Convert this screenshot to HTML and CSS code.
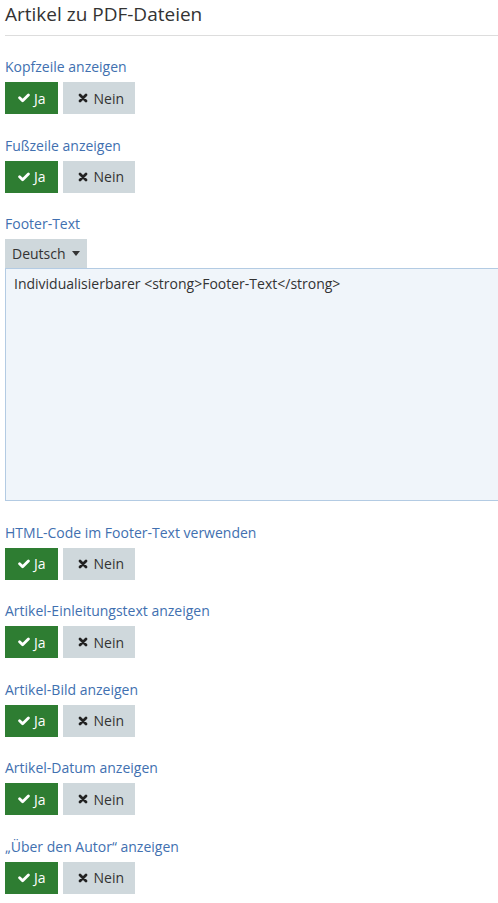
FILE: index.html
```html
<!DOCTYPE html>
<html lang="de">
<head>
<meta charset="utf-8">
<title>Artikel zu PDF-Dateien</title>
<link rel="stylesheet" href="styles.css">
</head>
<body>
<div class="page">
  <h1 class="title">Artikel zu PDF-Dateien</h1>

  <div class="group">
    <div class="label">Kopfzeile anzeigen</div>
    <div class="toggle">
      <span class="btn btn-yes"><svg class="ico-check" viewBox="0 0 12 10"><polyline points="1.6,4.8 4.6,7.8 10.4,2" /></svg>Ja</span>
      <span class="btn btn-no"><svg class="ico-x" viewBox="0 0 10 10"><path d="M2 2L8 8M8 2L2 8"/></svg>Nein</span>
    </div>
  </div>

  <div class="group">
    <div class="label">Fußzeile anzeigen</div>
    <div class="toggle">
      <span class="btn btn-yes"><svg class="ico-check" viewBox="0 0 12 10"><polyline points="1.6,4.8 4.6,7.8 10.4,2" /></svg>Ja</span>
      <span class="btn btn-no"><svg class="ico-x" viewBox="0 0 10 10"><path d="M2 2L8 8M8 2L2 8"/></svg>Nein</span>
    </div>
  </div>

  <div class="group">
    <div class="label">Footer-Text</div>
    <div class="lang"><span>Deutsch</span><span class="caret"></span></div>
    <div class="textarea">Individualisierbarer &lt;strong&gt;Footer-Text&lt;/strong&gt;</div>
  </div>

  <div class="group">
    <div class="label">HTML-Code im Footer-Text verwenden</div>
    <div class="toggle">
      <span class="btn btn-yes"><svg class="ico-check" viewBox="0 0 12 10"><polyline points="1.6,4.8 4.6,7.8 10.4,2" /></svg>Ja</span>
      <span class="btn btn-no"><svg class="ico-x" viewBox="0 0 10 10"><path d="M2 2L8 8M8 2L2 8"/></svg>Nein</span>
    </div>
  </div>

  <div class="group">
    <div class="label">Artikel-Einleitungstext anzeigen</div>
    <div class="toggle">
      <span class="btn btn-yes"><svg class="ico-check" viewBox="0 0 12 10"><polyline points="1.6,4.8 4.6,7.8 10.4,2" /></svg>Ja</span>
      <span class="btn btn-no"><svg class="ico-x" viewBox="0 0 10 10"><path d="M2 2L8 8M8 2L2 8"/></svg>Nein</span>
    </div>
  </div>

  <div class="group">
    <div class="label">Artikel-Bild anzeigen</div>
    <div class="toggle">
      <span class="btn btn-yes"><svg class="ico-check" viewBox="0 0 12 10"><polyline points="1.6,4.8 4.6,7.8 10.4,2" /></svg>Ja</span>
      <span class="btn btn-no"><svg class="ico-x" viewBox="0 0 10 10"><path d="M2 2L8 8M8 2L2 8"/></svg>Nein</span>
    </div>
  </div>

  <div class="group">
    <div class="label">Artikel-Datum anzeigen</div>
    <div class="toggle">
      <span class="btn btn-yes"><svg class="ico-check" viewBox="0 0 12 10"><polyline points="1.6,4.8 4.6,7.8 10.4,2" /></svg>Ja</span>
      <span class="btn btn-no"><svg class="ico-x" viewBox="0 0 10 10"><path d="M2 2L8 8M8 2L2 8"/></svg>Nein</span>
    </div>
  </div>

  <div class="group">
    <div class="label">„Über den Autor“ anzeigen</div>
    <div class="toggle">
      <span class="btn btn-yes"><svg class="ico-check" viewBox="0 0 12 10"><polyline points="1.6,4.8 4.6,7.8 10.4,2" /></svg>Ja</span>
      <span class="btn btn-no"><svg class="ico-x" viewBox="0 0 10 10"><path d="M2 2L8 8M8 2L2 8"/></svg>Nein</span>
    </div>
  </div>
</div>
</body>
</html>
```
FILE: styles.css
```css
html, body {
  margin: 0;
  padding: 0;
  background: #fff;
  overflow-x: hidden;
}
body {
  font-family: "Open Sans", "Liberation Sans", sans-serif;
  font-size: 14px;
  color: #333;
}
.page {
  padding: 0 0 0 5px;
}
.title {
  margin: 0;
  font-size: 19px;
  font-weight: 400;
  line-height: 26px;
  padding-top: 1px;
  padding-bottom: 8px;
  border-bottom: 1px solid #dddddd;
  margin-bottom: 21px;
  margin-right: -20px;
}
.group {
  margin-bottom: 21.5px;
}
.label {
  color: #4170b0;
  line-height: 20px;
  margin-bottom: 5px;
}
.toggle {
  display: flex;
  gap: 5px;
}
.btn {
  display: inline-flex;
  align-items: center;
  height: 32px;
  box-sizing: border-box;
  padding: 0 12px 0 13px;
  font-size: 14px;
}
.btn-yes {
  background: #2e7d32;
  color: #fff;
}
.btn-no {
  background: #cfd8dc;
  color: #333;
  padding: 0 11px 0 15px;
}
.ico-check {
  width: 12px;
  height: 10px;
  margin-right: 4px;
  fill: none;
  stroke: #fff;
  stroke-width: 2.8;
  stroke-linecap: round;
  stroke-linejoin: round;
}
.ico-x {
  width: 10px;
  height: 10px;
  margin-right: 6px;
  fill: none;
  stroke: #222;
  stroke-width: 2.8;
  stroke-linecap: round;
}
.lang {
  display: inline-flex;
  align-items: center;
  height: 29px;
  box-sizing: border-box;
  padding: 0 7px 0 7px;
  background: #cfd8dc;
  color: #333;
  vertical-align: top;
}
.caret {
  display: inline-block;
  width: 0;
  height: 0;
  margin-left: 6px;
  border-left: 4.5px solid transparent;
  border-right: 4.5px solid transparent;
  border-top: 5px solid #333;
}
.textarea {
  height: 233px;
  box-sizing: border-box;
  margin-right: -20px;
  border: 1px solid #b3cbe3;
  background: #f0f5fa;
  padding: 5px 8px;
  line-height: 20px;
  color: #333;
}
```
